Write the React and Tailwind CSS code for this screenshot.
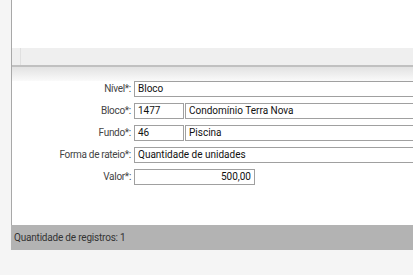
export default function App() {
  const font = { fontFamily: "Roboto, 'Noto Sans', sans-serif" };
  const inputCls =
    "h-[16px] border border-[#a0a0a0] bg-white px-[3px] text-[10px] leading-[14px] text-[#111] whitespace-nowrap overflow-hidden";
  const Label = ({ children }) => (
    <div className="w-[122px] text-right text-[10px] tracking-[-0.3px] leading-[16px] text-[#444] pr-[3px] shrink-0">{children}</div>
  );
  return (
    <div className="w-[413px] h-[275px] bg-[#f5f5f5] overflow-hidden flex flex-col" style={font}>
      <div className="ml-[11px] h-[225px] border-l border-[#a8a8a8] bg-white flex flex-col">
        <div className="h-[48px] bg-white" />
        <div className="h-[19px] bg-[#efefef] border-b-2 border-[#c0c0c0] flex">
          <div className="w-[9px] border-r border-[#e0e0e0]" />
        </div>
        <div className="h-[14px] bg-gradient-to-b from-[#e2e2e2] to-[#fafafa]" />
        <div className="flex flex-col gap-[6px]">
          <div className="flex items-center">
            <Label>Nível*:</Label>
            <div className={inputCls + " flex-1 -mr-[10px]"}>Bloco</div>
          </div>
          <div className="flex items-center">
            <Label>Bloco*:</Label>
            <div className={inputCls + " w-[50px]"}>1477</div>
            <div className={inputCls + " flex-1 ml-[1px] -mr-[10px]"}>Condomínio Terra Nova</div>
          </div>
          <div className="flex items-center">
            <Label>Fundo*:</Label>
            <div className={inputCls + " w-[50px]"}>46</div>
            <div className={inputCls + " flex-1 ml-[1px] -mr-[10px]"}>Piscina</div>
          </div>
          <div className="flex items-center">
            <Label>Forma de rateio*:</Label>
            <div className={inputCls + " flex-1 -mr-[10px]"}>Quantidade de unidades</div>
          </div>
          <div className="flex items-center">
            <Label>Valor*:</Label>
            <div className={inputCls + " w-[121px] text-right"}>500,00</div>
          </div>
        </div>
      </div>
      <div className="ml-[11px] h-[25px] bg-[#b3b3b3] flex items-center px-[3px] text-[10px] tracking-[-0.2px] text-[#333]">
        Quantidade de registros: 1
      </div>
    </div>
  );
}
